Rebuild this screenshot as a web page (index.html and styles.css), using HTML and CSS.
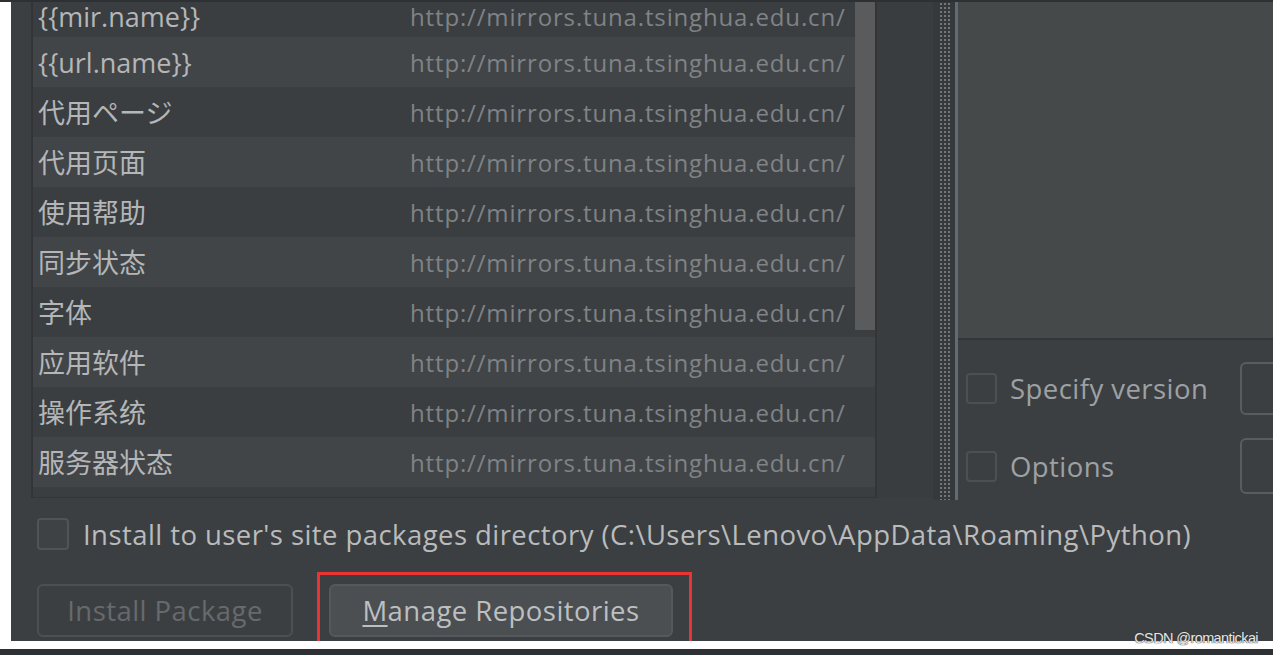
FILE: index.html
```html
<!DOCTYPE html>
<html>
<head>
<meta charset="utf-8">
<link rel="stylesheet" href="styles.css">
</head>
<body>
<div class="screen">
  <div class="topbar"></div>
  <div class="middle">
    <div class="leftwhite"></div>
    <div class="panel">
      <div class="upper">
        <div class="gutter"></div>
        <div class="table">
          <div class="rows">
            <div class="row dark first"><span class="name">{{mir.name}}</span><span class="url">http://mirrors.tuna.tsinghua.edu.cn/</span></div>
            <div class="row light"><span class="name">{{url.name}}</span><span class="url">http://mirrors.tuna.tsinghua.edu.cn/</span></div>
            <div class="row dark"><span class="name">代用ページ</span><span class="url">http://mirrors.tuna.tsinghua.edu.cn/</span></div>
            <div class="row light"><span class="name">代用页面</span><span class="url">http://mirrors.tuna.tsinghua.edu.cn/</span></div>
            <div class="row dark"><span class="name">使用帮助</span><span class="url">http://mirrors.tuna.tsinghua.edu.cn/</span></div>
            <div class="row light"><span class="name">同步状态</span><span class="url">http://mirrors.tuna.tsinghua.edu.cn/</span></div>
            <div class="row dark"><span class="name">字体</span><span class="url">http://mirrors.tuna.tsinghua.edu.cn/</span></div>
            <div class="row light"><span class="name">应用软件</span><span class="url">http://mirrors.tuna.tsinghua.edu.cn/</span></div>
            <div class="row dark"><span class="name">操作系统</span><span class="url">http://mirrors.tuna.tsinghua.edu.cn/</span></div>
            <div class="row light"><span class="name">服务器状态</span><span class="url">http://mirrors.tuna.tsinghua.edu.cn/</span></div>
            <div class="row dark"></div>
          </div>
          <div class="thumb"></div>
        </div>
        <div class="filler"></div>
        <div class="splitter"><div class="grip"></div></div>
        <div class="right">
          <div class="desc"></div>
          <div class="opt firstopt">
            <span class="cb"></span>
            <span class="optlabel">Specify version</span>
            <span class="field"></span>
          </div>
          <div class="opt">
            <span class="cb"></span>
            <span class="optlabel">Options</span>
            <span class="field tall"></span>
          </div>
        </div>
      </div>
      <div class="usersite">
        <span class="cb big"></span>
        <span class="sitelabel">Install to user's site packages directory (C:\Users\Lenovo\AppData\Roaming\Python)</span>
      </div>
      <div class="buttons">
        <div class="btn disabled">Install Package</div>
        <div class="highlight">
          <div class="btn primary"><u>M</u>anage Repositories</div>
        </div>
      </div>
    </div>
  </div>
  <div class="bottomwhite"></div>
  <div class="bottomdark"></div>
  <div class="watermark">CSDN @romantickai</div>
</div>
</body>
</html>
```
FILE: styles.css
```css
* { box-sizing: border-box; }
html, body { margin: 0; padding: 0; }
body {
  width: 1273px;
  height: 655px;
  overflow: hidden;
  background: #ffffff;
  font-family: "Open Sans", "Noto Sans CJK SC", sans-serif;
}
.screen {
  position: relative;
  width: 1273px;
  height: 655px;
  display: flex;
  flex-direction: column;
}
.topbar { height: 2px; background: #2e3134; flex-shrink: 0; }
.middle { height: 639px; display: flex; flex-shrink: 0; }
.leftwhite { width: 11px; background: #ffffff; flex-shrink: 0; }
.panel {
  flex: 1;
  background: #3c3f41;
  overflow: hidden;
  display: flex;
  flex-direction: column;
}
.upper { height: 498px; display: flex; flex-shrink: 0; }
.gutter { width: 20px; flex-shrink: 0; }
.table {
  position: relative;
  width: 846px;
  height: 496px;
  flex-shrink: 0;
  border-left: 2px solid #323437;
  border-right: 2px solid #333538;
  border-bottom: 1px solid #333538;
  overflow: hidden;
}
.rows { margin-top: -12px; }
.row {
  height: 50px;
  padding-top: 2px;
  display: flex;
  align-items: center;
  white-space: nowrap;
}
.row.first { height: 47px; padding-top: 6px; }
.row.dark { background: #3b3e40; }
.row.light { background: #424547; }
.name {
  width: 377px;
  padding-left: 5px;
  font-size: 27px;
  line-height: 22px;
  color: #b4b6b8;
  flex-shrink: 0;
}
.url {
  color: #7f8386;
  font-size: 24px;
  line-height: 22px;
  letter-spacing: 0.85px;
}
.thumb {
  position: absolute;
  top: 0;
  right: 0;
  width: 20px;
  height: 328px;
  background: #595b5d;
}
.filler { width: 56px; height: 496px; background: #3a3d3f; flex-shrink: 0; }
.splitter {
  width: 25px;
  height: 498px;
  flex-shrink: 0;
  background: #36393b;
  border-right: 3px solid #5f6c76;
  display: flex;
  justify-content: center;
  padding-left: 2px;
}
.grip {
  width: 12px;
  height: 100%;
  background-image: radial-gradient(circle, #74777a 0.9px, transparent 1.4px);
  background-size: 4px 4px;
}
.right { flex: 1; overflow: hidden; display: flex; flex-direction: column; }
.desc {
  height: 338px;
  background: #45494a;
  border-bottom: 2px solid #333537;
  flex-shrink: 0;
}
.opt {
  height: 56px;
  display: flex;
  align-items: center;
  padding-left: 8px;
  margin-top: 22px;
  flex-shrink: 0;
}
.opt.firstopt { margin-top: 20px; }
.cb {
  width: 31px;
  height: 31px;
  border: 2px solid #4d5052;
  border-radius: 4px;
  flex-shrink: 0;
}
.optlabel {
  width: 230px;
  margin-left: 13px;
  font-size: 27.5px;
  letter-spacing: 0.45px;
  color: #9ea1a4;
  flex-shrink: 0;
  white-space: nowrap;
}
.field {
  width: 60px;
  height: 53px;
  border: 2px solid #5a5d60;
  border-radius: 6px;
  flex-shrink: 0;
}
.field.tall { height: 56px; }
.usersite {
  display: flex;
  align-items: center;
  padding-left: 26px;
  margin-top: 18px;
  height: 32px;
  flex-shrink: 0;
}
.cb.big { width: 32px; height: 32px; background: #3e4244; border-color: #515456; }
.sitelabel {
  margin-left: 14px;
  font-size: 27.5px;
  letter-spacing: 0.43px;
  color: #b9bbbd;
  white-space: nowrap;
}
.buttons {
  display: flex;
  align-items: flex-start;
  padding-left: 26px;
  margin-top: 22px;
  flex-shrink: 0;
}
.btn {
  height: 53px;
  border-radius: 6px;
  display: flex;
  align-items: center;
  justify-content: center;
  font-size: 27.5px;
  letter-spacing: 0.45px;
  white-space: nowrap;
}
.btn.disabled {
  width: 256px;
  margin-top: 12px;
  border: 2px solid #4d5052;
  color: #676a6d;
}
.btn.primary {
  width: 344px;
  background: #4b4f51;
  border: 2px solid #55595b;
  color: #bdbfc1;
}
.btn u { text-decoration-thickness: 2px; text-underline-offset: 4px; }
.highlight {
  margin-left: 24px;
  border: 3px solid #ea3433;
  padding: 9px 16px 20px 9px;
}
.bottomwhite { height: 8px; background: #ffffff; flex-shrink: 0; }
.bottomdark { height: 6px; background: #2e3134; flex-shrink: 0; }
.watermark {
  position: absolute;
  right: 15px;
  bottom: 9px;
  font-family: "Liberation Sans", Arial, sans-serif;
  font-size: 14.5px;
  letter-spacing: -0.6px;
  color: #e6e6e6;
  text-shadow: 0 0 1px #333, 0 0 1px #333;
}
```
